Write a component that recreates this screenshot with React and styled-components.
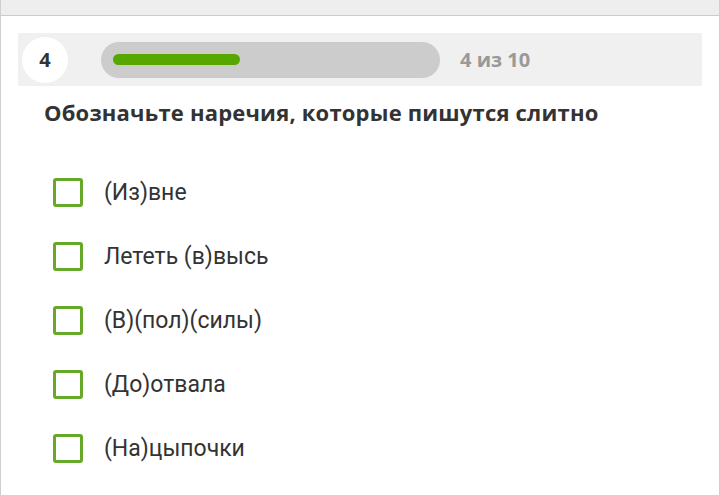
import React from "react";
import styled, { createGlobalStyle } from "styled-components";

const GlobalStyle = createGlobalStyle`
  html, body {
    margin: 0;
    padding: 0;
    background: #ffffff;
  }
  body {
    font-family: Roboto, "Liberation Sans", sans-serif;
    color: #333333;
  }
`;

const Page = styled.div`
  width: 720px;
  height: 495px;
  box-sizing: border-box;
  border-left: 1px solid #cfcfcf;
  border-right: 1px solid #cfcfcf;
  overflow: hidden;
`;

const TopBar = styled.div`
  height: 15px;
  background: #eeeeee;
  border-bottom: 1px solid #cccccc;
`;

const Header = styled.div`
  display: flex;
  align-items: center;
  margin: 17px 17px 0 17px;
  height: 53px;
  padding-left: 4px;
  background: #f0f0f0;
`;

const Counter = styled.div`
  width: 46px;
  height: 46px;
  border-radius: 50%;
  background: #ffffff;
  display: flex;
  align-items: center;
  justify-content: center;
  font-family: "Open Sans", "Liberation Sans", sans-serif;
  font-weight: 700;
  font-size: 20px;
  color: #333333;
`;

const Track = styled.div`
  width: 339px;
  height: 36px;
  margin-left: 33px;
  border-radius: 18px;
  background: #cccccc;
  display: flex;
  align-items: center;
  padding-left: 12px;
  box-sizing: border-box;
`;

const Fill = styled.div`
  height: 11px;
  border-radius: 6px;
  background: #58a700;
`;

const Steps = styled.div`
  margin-left: 20px;
  font-family: "Open Sans", "Liberation Sans", sans-serif;
  font-weight: 700;
  font-size: 20px;
  color: #999999;
`;

const Title = styled.h1`
  margin: 12px 0 0 43px;
  font-family: "Open Sans", "Liberation Sans", sans-serif;
  font-weight: 700;
  font-size: 22px;
  letter-spacing: 0.2px;
  line-height: 28px;
  color: #333333;
`;

const Options = styled.div`
  display: flex;
  flex-direction: column;
  gap: 34px;
  margin: 51px 0 0 52px;
`;

const Option = styled.label`
  display: flex;
  align-items: center;
  gap: 21px;
  height: 30px;
  font-family: Roboto, "Liberation Sans", sans-serif;
  font-size: 23px;
  color: #333333;
`;

const Box = styled.span`
  width: 30px;
  height: 29px;
  box-sizing: border-box;
  border: 3px solid #66a827;
  border-radius: 3px;
  background: #ffffff;
`;

const items = [
  "(Из)вне",
  "Лететь (в)высь",
  "(В)(пол)(силы)",
  "(До)отвала",
  "(На)цыпочки",
];

export default function App() {
  const current = 4;
  const total = 10;
  return (
    <>
      <GlobalStyle />
      <Page>
        <TopBar />
        <Header>
          <Counter>{current}</Counter>
          <Track>
            <Fill style={{ width: 127 }} />
          </Track>
          <Steps>
            {current} из {total}
          </Steps>
        </Header>
        <Title>Обозначьте наречия, которые пишутся слитно</Title>
        <Options>
          {items.map((text) => (
            <Option key={text}>
              <Box />
              {text}
            </Option>
          ))}
        </Options>
      </Page>
    </>
  );
}
